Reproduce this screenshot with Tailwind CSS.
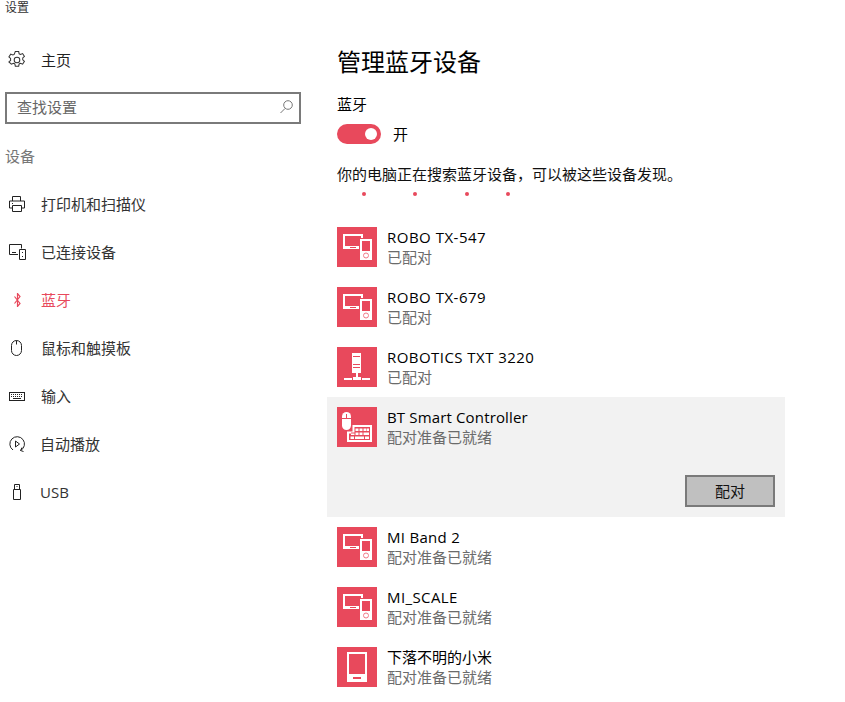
<!DOCTYPE html>
<html lang="zh">
<head>
<meta charset="utf-8">
<script src="https://cdn.jsdelivr.net/npm/@tailwindcss/browser@4"></script>
</head>
<body class="bg-white overflow-hidden font-['Open_Sans','Noto_Sans_CJK_SC',sans-serif] text-[15px] leading-[20px] text-black">
<svg width="0" height="0" class="absolute">
  <defs>
    <symbol id="pc" viewBox="0 0 40 40">
      <path fill="#fff" d="M6 7h20v15H6zM8 9v10h16V9z" fill-rule="evenodd"/>
      <rect x="13" y="20" width="6" height="1" fill="#e8495c"/>
      <rect x="22" y="11" width="14" height="23" fill="#e8495c"/>
      <path fill="#fff" fill-rule="evenodd" d="M23 12h12v21H23zM25 14v10h8V14z"/>
      <circle cx="29" cy="28.500" r="2.500" fill="none" stroke="#f27a88" stroke-width="1"/>
    </symbol>
    <symbol id="tower" viewBox="0 0 40 40">
      <path fill="#fff" fill-rule="evenodd" d="M15 6h9v20h-9zM16 9v1h7V9zM16 17v1h7v-1zM16 20v1h7v-1z"/>
      <path fill="#fff" d="M19 26h2v5h-2zM7 31h8v2H7zM16 30h8v3h-8zM25 31h8v2h-8z"/>
    </symbol>
    <symbol id="kbd" viewBox="0 0 40 40">
      <path fill="#fff" d="M5 9.500a4.500 4.500 0 0 1 9 0v9a4.500 4.500 0 0 1-9 0z"/>
      <rect x="9" y="7" width="1" height="5" fill="#e8495c"/>
      <rect x="5" y="11" width="9" height="1" fill="#e8495c"/>
      <path fill="#fff" fill-rule="evenodd" d="M15.500 18H35v17H10V24.500h5.500zM12 26.500V33h21V20H17.500v6.500zM18.500 21.500h3v2.500h-3zM22.500 21.500h3v2.500h-3zM26.500 21.500h3v2.500h-3zM30 21.500h2v2.500h-2zM14 25.500h3.500V28H14zM18.500 25.500h3V28h-3zM22.500 25.500h3V28h-3zM26.500 25.500h5.500V28h-5.500zM13.500 29.500h3.500V32h-3.500zM18 29.500h9V32h-9zM28 29.500h4V32h-4z"/>
    </symbol>
    <symbol id="phone" viewBox="0 0 40 40">
      <path fill="#fff" fill-rule="evenodd" d="M10 5h20v30H10zM12 7v20h16V7zM16 30v2h8v-2z"/>
    </symbol>
  </defs>
</svg>
<div class="flex w-[845px] h-[702px] overflow-hidden">
  <aside class="w-[327px] shrink-0">
    <div class="h-[15px] pl-[5px] text-[12px] leading-[15px] text-[#333]">设置</div>
    <a class="flex items-center h-[48px] mt-[21px] text-[#222]">
      <span class="w-[41px] pl-[8px] shrink-0">
        <svg width="18" height="18" viewBox="0 0 16 16" fill="none" stroke="#333" stroke-width=".9" class="block"><circle cx="8" cy="8" r="2.500"/><path d="M6.500.500h3l.4 2 1.200.6 1.900-.8 1.600 2.500-1.500 1.300v1.800l1.500 1.300-1.600 2.500-1.900-.8-1.200.6-.4 2h-3l-.4-2-1.200-.6-1.900.8L.800 9.700l1.500-1.300V6.600L.800 5.300l1.600-2.500 1.900.8 1.200-.6z"/></svg>
      </span>主页
    </a>
    <div class="flex items-center justify-between w-[296px] h-[32px] ml-[5px] mt-2 border-2 border-[#7a7a7a] pl-[10px] pr-[6px] pb-[2px] text-[#666]">
      查找设置
      <svg width="13" height="14" viewBox="0 0 13 14" fill="none" stroke="#777"><circle cx="8" cy="5" r="4.300"/><path d="M5 8.500.500 13"/></svg>
    </div>
    <div class="flex items-center h-[48px] mt-2 pl-[5px] text-[#777]">设备</div>
    <nav>
      <a class="flex items-center h-[48px] text-[#333]">
        <span class="w-[41px] pl-[9px] shrink-0"><svg width="16" height="16" viewBox="0 0 16 16" fill="none" stroke="#222" class="block"><path d="M3.500 5V.500h8V5M3.500 12H.500V5h15v7h-3M3.500 9.500h9v6h-9zM3 7.500h1"/></svg></span>打印机和扫描仪
      </a>
      <a class="flex items-center h-[48px] text-[#333]">
        <span class="w-[41px] pl-[9px] shrink-0"><svg width="17" height="16" viewBox="0 0 17 16" fill="none" stroke="#222" class="block"><path d="M9 10.500H.500V.500h12v4M3 8.500h4"/><path d="M10.500 5.500h6v10h-6zM13.500 8v1M13.500 12v1"/></svg></span>已连接设备
      </a>
      <a class="flex items-center h-[48px] text-[#e8495c]">
        <span class="w-[41px] pl-[14px] shrink-0"><svg width="7" height="14" viewBox="0 0 7 14" fill="none" stroke="#e8495c" stroke-width="1.200" class="block"><path d="M.500 3.500l5.500 7-2.500 3V.500L6 3.500l-5.500 7"/></svg></span>蓝牙
      </a>
      <a class="flex items-center h-[48px] text-[#333]">
        <span class="w-[41px] pl-[11px] shrink-0"><svg width="11" height="16" viewBox="0 0 11 16" fill="none" stroke="#222" class="block"><rect x=".5" y=".5" width="10" height="15" rx="5"/><path d="M5.500.500v4"/></svg></span>鼠标和触摸板
      </a>
      <a class="flex items-center h-[48px] text-[#333]">
        <span class="w-[41px] pl-[9px] shrink-0"><svg width="16" height="9" viewBox="0 0 16 9" fill="none" stroke="#222" class="block"><rect x=".5" y=".5" width="15" height="8"/><path stroke-dasharray="1 1" d="M2 2.500h12M2 4.500h12"/><path d="M4 6.500h8"/></svg></span>输入
      </a>
      <a class="flex items-center h-[48px] text-[#333]">
        <span class="w-[40px] pl-[9px] shrink-0"><svg width="16" height="16" viewBox="0 0 16 16" fill="none" stroke="#222" class="block"><path d="M4 14A7.300 7.300 0 1 1 11.500 14.500"/><path d="M13 11.500l-1.500 3 3 1"/><path d="M6.500 5l4 3-4 3z"/></svg></span>自动播放
      </a>
      <a class="flex items-center h-[48px] text-[#333]">
        <span class="w-[40px] pl-[13px] shrink-0"><svg width="8" height="16" viewBox="0 0 8 16" fill="none" stroke="#222" class="block"><path d="M.500 5.500h7v10h-7zM1.500 5.500v-5h5v5M3 2.500h.5M4.500 2.500H5"/></svg></span>USB
      </a>
    </nav>
  </aside>
  <main class="w-[458px] shrink-0">
    <div class="pl-[10px]">
      <h1 class="h-[40px] mt-[42px] text-[24px] leading-[40px] font-normal">管理蓝牙设备</h1>
      <div class="h-[24px] mt-[10px] leading-[24px]">蓝牙</div>
      <div class="flex items-center h-[20px] mt-2">
        <span class="flex items-center justify-end w-[44px] h-[20px] rounded-full bg-[#e8495c] pr-[4px]"><span class="block w-[12px] h-[12px] rounded-full bg-white"></span></span>
        <span class="ml-[12px]">开</span>
      </div>
      <p class="h-[24px] mt-[18px] leading-[24px] text-[#111]">你的电脑正在搜索蓝牙设备，可以被这些设备发现。</p>
      <div class="flex h-[4px] mt-[6px] pl-[25px]">
        <span class="w-[4px] h-[4px] rounded-full bg-[#e8495c]"></span>
        <span class="w-[4px] h-[4px] rounded-full bg-[#e8495c] ml-[47px]"></span>
        <span class="w-[4px] h-[4px] rounded-full bg-[#e8495c] ml-[48px]"></span>
        <span class="w-[4px] h-[4px] rounded-full bg-[#e8495c] ml-[37px]"></span>
      </div>
    </div>
    <ul class="mt-[21px]">
      <li class="flex h-[60px] p-[10px] gap-[10px]">
        <span class="w-[40px] h-[40px] bg-[#e8495c] shrink-0"><svg width="40" height="40" class="block"><use href="#pc"/></svg></span>
        <div><div class="tracking-[0.5px]">ROBO TX-547</div><div class="text-[#6b6b6b]">已配对</div></div>
      </li>
      <li class="flex h-[60px] p-[10px] gap-[10px]">
        <span class="w-[40px] h-[40px] bg-[#e8495c] shrink-0"><svg width="40" height="40" class="block"><use href="#pc"/></svg></span>
        <div><div class="tracking-[0.5px]">ROBO TX-679</div><div class="text-[#6b6b6b]">已配对</div></div>
      </li>
      <li class="flex h-[60px] p-[10px] gap-[10px]">
        <span class="w-[40px] h-[40px] bg-[#e8495c] shrink-0"><svg width="40" height="40" class="block"><use href="#tower"/></svg></span>
        <div><div class="tracking-[0.45px]">ROBOTICS TXT 3220</div><div class="text-[#6b6b6b]">已配对</div></div>
      </li>
      <li class="h-[120px] p-[10px] bg-[#f2f2f2]">
        <div class="flex gap-[10px]">
          <span class="w-[40px] h-[40px] bg-[#e8495c] shrink-0"><svg width="40" height="40" class="block"><use href="#kbd"/></svg></span>
          <div><div class="tracking-[0.15px]">BT Smart Controller</div><div class="text-[#6b6b6b]">配对准备已就绪</div></div>
        </div>
        <div class="flex justify-end mt-[28px]">
          <button class="w-[90px] h-[32px] border-2 border-[#7a7a7a] bg-[#c0c0c0] text-[#111]">配对</button>
        </div>
      </li>
      <li class="flex h-[60px] p-[10px] gap-[10px]">
        <span class="w-[40px] h-[40px] bg-[#e8495c] shrink-0"><svg width="40" height="40" class="block"><use href="#pc"/></svg></span>
        <div><div class="tracking-[0.3px]">MI Band 2</div><div class="text-[#6b6b6b]">配对准备已就绪</div></div>
      </li>
      <li class="flex h-[60px] p-[10px] gap-[10px]">
        <span class="w-[40px] h-[40px] bg-[#e8495c] shrink-0"><svg width="40" height="40" class="block"><use href="#pc"/></svg></span>
        <div><div class="tracking-[0.4px]">MI_SCALE</div><div class="text-[#6b6b6b]">配对准备已就绪</div></div>
      </li>
      <li class="flex h-[60px] p-[10px] gap-[10px]">
        <span class="w-[40px] h-[40px] bg-[#e8495c] shrink-0"><svg width="40" height="40" class="block"><use href="#phone"/></svg></span>
        <div><div>下落不明的小米</div><div class="text-[#6b6b6b]">配对准备已就绪</div></div>
      </li>
    </ul>
  </main>
</div>
</body>
</html>
